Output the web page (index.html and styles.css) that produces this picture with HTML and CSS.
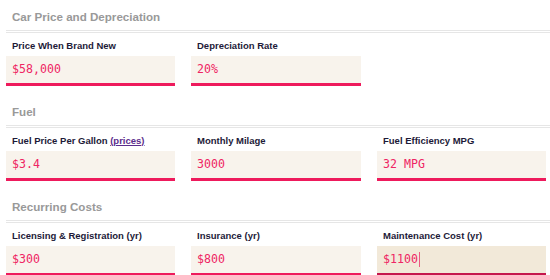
FILE: index.html
```html
<!DOCTYPE html>
<html>
<head>
<meta charset="utf-8">
<link rel="stylesheet" href="styles.css">
</head>
<body>
<div class="page">
  <section class="group">
    <h2 class="group-title">Car Price and Depreciation</h2>
    <div class="fields">
      <div class="field">
        <div class="label">Price When Brand New</div>
        <div class="input">$58,000</div>
      </div>
      <div class="field">
        <div class="label">Depreciation Rate</div>
        <div class="input">20%</div>
      </div>
    </div>
  </section>
  <section class="group">
    <h2 class="group-title">Fuel</h2>
    <div class="fields">
      <div class="field">
        <div class="label">Fuel Price Per Gallon <a class="link" href="#">(prices)</a></div>
        <div class="input">$3.4</div>
      </div>
      <div class="field">
        <div class="label">Monthly Milage</div>
        <div class="input">3000</div>
      </div>
      <div class="field">
        <div class="label">Fuel Efficiency MPG</div>
        <div class="input">32 MPG</div>
      </div>
    </div>
  </section>
  <section class="group">
    <h2 class="group-title">Recurring Costs</h2>
    <div class="fields">
      <div class="field">
        <div class="label">Licensing &amp; Registration (yr)</div>
        <div class="input">$300</div>
      </div>
      <div class="field">
        <div class="label">Insurance (yr)</div>
        <div class="input">$800</div>
      </div>
      <div class="field">
        <div class="label">Maintenance Cost (yr)</div>
        <div class="input focused">$1100<span class="caret"></span></div>
      </div>
    </div>
  </section>
</div>
</body>
</html>
```

FILE: styles.css
```css
html, body {
  margin: 0;
  padding: 0;
  background: #ffffff;
  overflow: hidden;
}
body {
  font-family: "Liberation Sans", Arial, sans-serif;
}
.page {
  padding: 7px 0 0 6px;
  display: flex;
  flex-direction: column;
  gap: 16px;
}
.group {
  display: flex;
  flex-direction: column;
}
.group-title {
  margin: 0;
  font-size: 11.6px;
  line-height: 20px;
  font-weight: bold;
  color: #999999;
  padding: 0 0 3px 6px;
  border-bottom: 3px double #e6e6e6;
}
.fields {
  display: grid;
  grid-template-columns: 169px 170px 169px;
  column-gap: 16px;
  margin-top: 6px;
}
.field {
  display: flex;
  flex-direction: column;
}
.label {
  font-size: 9.5px;
  line-height: 14px;
  font-weight: bold;
  color: #1d1a38;
  padding-left: 6px;
  margin-bottom: 3px;
  white-space: nowrap;
}
.link {
  color: #5b2d8c;
  font-weight: bold;
  text-decoration: underline;
}
.input {
  height: 27px;
  background: #f8f3ec;
  border-bottom: 3px solid #ee1a5c;
  font-family: "DejaVu Sans Mono", "Liberation Mono", monospace;
  font-size: 11.6px;
  line-height: 27px;
  color: #ef2563;
  padding-left: 6px;
  display: flex;
  align-items: center;
}
.input.focused {
  background: #f2e9d9;
  border-bottom-color: #c5174d;
}
.caret {
  display: inline-block;
  width: 1px;
  height: 15px;
  background: #ec5a80;
  margin-left: 1px;
}
```
